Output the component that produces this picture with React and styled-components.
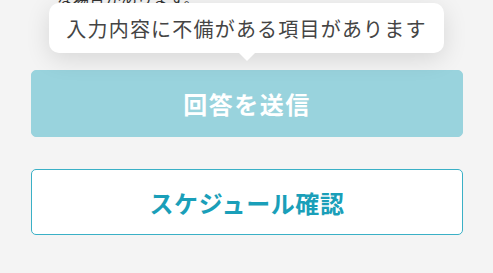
import React from 'react';
import styled, { createGlobalStyle } from 'styled-components';

const GlobalStyle = createGlobalStyle`
  html, body {
    margin: 0;
    padding: 0;
    background: #f4f4f4;
  }
  body {
    font-family: "Noto Sans CJK JP", "Noto Sans", sans-serif;
  }
`;

const Page = styled.div`
  width: 493px;
  height: 273px;
  overflow: hidden;
  box-sizing: border-box;
  padding: 0 30px 0 31px;
`;

const Note = styled.p`
  margin: -14px 0 0 26px;
  font-size: 16px;
  line-height: 24px;
  color: #333;
`;

const SubmitArea = styled.div`
  position: relative;
  margin-top: 60px;
`;

const Tooltip = styled.div`
  position: absolute;
  z-index: 1;
  left: 18px;
  right: 19px;
  bottom: calc(100% + 17px);
  height: 50px;
  box-sizing: border-box;
  display: flex;
  align-items: center;
  justify-content: center;
  background: #fff;
  border-radius: 10px;
  box-shadow: 0 6px 24px rgba(0, 0, 0, 0.12);
  color: #444;
  font-size: 20px;
  letter-spacing: 1.2px;
  white-space: nowrap;

  &::after {
    content: '';
    position: absolute;
    left: 50%;
    top: 100%;
    margin-left: -8px;
    border-left: 8px solid transparent;
    border-right: 8px solid transparent;
    border-top: 8px solid #fff;
  }
`;

const Button = styled.button`
  display: flex;
  align-items: center;
  justify-content: center;
  width: 432px;
  height: ${({ tall }) => (tall ? '67px' : '66px')};
  margin: 0;
  padding: 0;
  box-sizing: border-box;
  border-radius: 5px;
  font-family: "Noto Sans CJK JP", "Noto Sans", sans-serif;
  font-size: 24px;
  font-weight: 700;
  letter-spacing: ${({ spacing }) => spacing};
  cursor: pointer;
  background: ${({ outline }) => (outline ? '#fff' : '#99d3dd')};
  color: ${({ outline }) => (outline ? '#1a9fb9' : '#fff')};
  border: 1px solid ${({ outline }) => (outline ? '#3ab0c6' : '#99d3dd')};
`;

const SecondRow = styled.div`
  margin-top: 32px;
`;

export default function App() {
  return (
    <>
      <GlobalStyle />
      <Page>
        <Note>な場合があります。</Note>
        <SubmitArea>
          <Tooltip>入力内容に不備がある項目があります</Tooltip>
          <Button tall spacing="1.5px" disabled>回答を送信</Button>
        </SubmitArea>
        <SecondRow>
          <Button outline spacing="0.6px">スケジュール確認</Button>
        </SecondRow>
      </Page>
    </>
  );
}
